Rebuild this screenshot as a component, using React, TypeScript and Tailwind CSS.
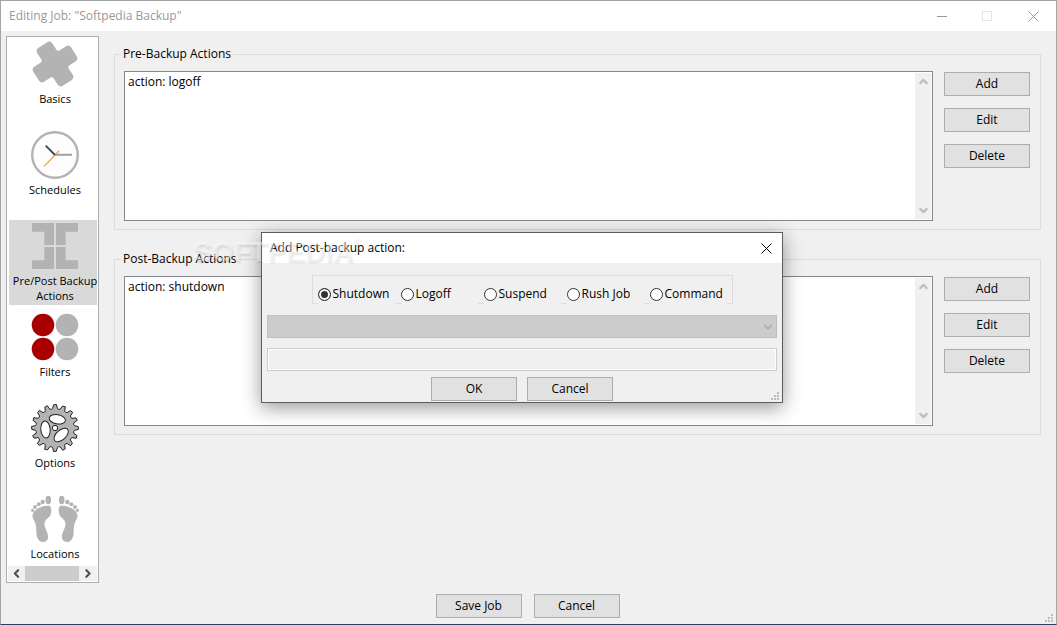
import { useState } from 'react'
import type { ReactNode } from 'react'
import { ChevronDown, ChevronLeft, ChevronRight, ChevronUp } from 'lucide-react'

function BasicsIcon() {
  return (
    <path
      transform="rotate(-33 24 24)"
      fill="#b3b3b3"
      d="M19 1.500h10q4 0 4 4v7q0 2.500 2.500 2.500h7q4 0 4 4v10q0 4-4 4h-7q-2.500 0-2.500 2.500v7q0 4-4 4h-10q-4 0-4-4v-7q0-2.500-2.500-2.500h-7q-4 0-4-4v-10q0-4 4-4h7q2.500 0 2.500-2.500v-7q0-4 4-4z"
    />
  )
}

function SchedulesIcon() {
  return (
    <g fill="none">
      <circle cx="24" cy="24" r="22.8" fill="#fdfdfd" stroke="#b3b3b3" strokeWidth="2.4" />
      <path d="M24 23.8h17" stroke="#95a5a5" strokeWidth="2" />
      <path d="M13 35.300l15-15.300" stroke="#f0a030" strokeWidth="1.200" />
      <path d="M14.700 14.700l9.300 9.300" stroke="#34495e" strokeWidth="1.800" />
    </g>
  )
}

function ActionsIcon() {
  return (
    <g fill="#b3b3b3">
      <path d="M1 1h22v22h-9.700V9.700H1z" />
      <path d="M47 1H25v22h9.700V9.700H47z" />
      <path d="M1 47h22V25h-9.700v13.300H1z" />
      <path d="M47 47H25V25h9.700v13.300H47z" />
    </g>
  )
}

function FiltersIcon() {
  return (
    <g>
      <circle cx="12" cy="12" r="11.300" fill="#a80000" />
      <circle cx="12" cy="36" r="11.300" fill="#a80000" />
      <circle cx="36" cy="12" r="11.300" fill="#b3b3b3" />
      <circle cx="36" cy="36" r="11.300" fill="#b3b3b3" />
    </g>
  )
}

// radius / angle (in degrees) pairs for one tooth, repeated around the wheel
const toothShape = [
  [19, -11],
  [19.6, -7],
  [23.2, -3.5],
  [23.6, 3.5],
  [19.6, 7],
]

const gearPoints = Array.from({ length: 16 }, (_, i) =>
  toothShape
    .map(([r, a]) => {
      const angle = ((i * 22.5 + a) * Math.PI) / 180
      return `${24 + r * Math.cos(angle)},${24 + r * Math.sin(angle)}`
    })
    .join(' '),
).join(' ')

function OptionsIcon() {
  return (
    <g fill="white" stroke="#222" strokeWidth="1">
      <polygon points={gearPoints} fill="#b3b3b3" strokeLinejoin="round" />
      <ellipse cx="26.300" cy="15.300" rx="8.200" ry="4.600" transform="rotate(10 26.3 15.3)" />
      <ellipse cx="14.500" cy="25.500" rx="4.700" ry="8.500" transform="rotate(-5 14.5 25.5)" />
      <ellipse cx="30.200" cy="31" rx="8.600" ry="4.800" transform="rotate(-42 30.2 31)" />
      <circle cx="24" cy="24" r="2.700" />
    </g>
  )
}

function Foot() {
  return (
    <>
      <ellipse cx="17.300" cy="5" rx="2.800" ry="4.200" />
      <circle cx="11.700" cy="7" r="2.200" />
      <circle cx="7.700" cy="9.200" r="2" />
      <circle cx="4" cy="12" r="1.900" />
      <circle cx="1.600" cy="15.300" r="1.600" />
      <path d="M2 18.500C5 13 12 10 18.500 10.800C21 12 20.500 18 19 21C16 24 13 26 13.500 30C14.500 35 17.500 38 17 43C16.500 46 14 47.300 11 47C7 46 5.500 42 5.300 37C5.500 31 4.500 28 2.500 24.500C1.500 22 1 20 2 18.500z" />
    </>
  )
}

function LocationsIcon() {
  return (
    <g fill="#b3b3b3">
      <Foot />
      <g transform="translate(48 0) scale(-1 1)">
        <Foot />
      </g>
    </g>
  )
}

const sections = [
  { name: 'Basics', icon: <BasicsIcon /> },
  { name: 'Schedules', icon: <SchedulesIcon /> },
  { name: 'Pre/Post Backup\nActions', icon: <ActionsIcon /> },
  { name: 'Filters', icon: <FiltersIcon /> },
  { name: 'Options', icon: <OptionsIcon /> },
  { name: 'Locations', icon: <LocationsIcon /> },
]

const actionTypes = ['Shutdown', 'Logoff', 'Suspend', 'Rush Job', 'Command']

function Button({ children }: { children: ReactNode }) {
  return (
    <button
      type="button"
      className="h-6 w-[86px] shrink-0 border border-[#adadad] bg-[#e1e1e1] leading-4 hover:bg-[#e5f1fb]"
    >
      {children}
    </button>
  )
}

function CloseIcon() {
  return (
    <svg viewBox="0 0 11 11" className="size-[11px]" stroke="currentColor">
      <path d="M.5.5l10 10M10.500.5l-10 10" />
    </svg>
  )
}

function ResizeGrip() {
  return (
    <svg viewBox="0 0 8 8" className="absolute right-[3px] bottom-[2px] size-2" fill="#bcbcbc">
      <path d="M6 0h2v2H6zM3 3h2v2H3zM6 3h2v2H6zM0 6h2v2H0zM3 6h2v2H3zM6 6h2v2H6z" />
    </svg>
  )
}

function Sidebar() {
  const [active, setActive] = useState(sections[2].name)

  return (
    <nav className="flex w-[93px] shrink-0 flex-col border border-[#abadb3] bg-white p-px">
      <ul className="min-h-0 flex-1 overflow-hidden pl-px">
        {sections.map((section) => (
          <li key={section.name} className="h-[91px]">
            <button
              type="button"
              onClick={() => setActive(section.name)}
              className={`flex w-full flex-col items-center gap-[3px] py-[2px] pl-1 text-[11px] leading-[15px] ${
                active === section.name ? 'bg-[#d9d9d9]' : ''
              }`}
            >
              <svg viewBox="0 0 48 48" className="size-12" aria-hidden="true">
                {section.icon}
              </svg>
              <span className="text-center whitespace-pre">{section.name}</span>
            </button>
          </li>
        ))}
      </ul>
      <div className="flex h-[15px] items-center bg-[#f0f0f0] text-[#505050]">
        <ChevronLeft className="w-[17px]" size={13} strokeWidth={4} />
        <div className="h-full w-[54px] bg-[#cdcdcd]" />
        <ChevronRight className="flex-1" size={13} strokeWidth={4} />
      </div>
    </nav>
  )
}

function ActionGroup({ title, action }: { title: string; action: string }) {
  return (
    <fieldset className="min-w-0 border border-[#dcdcdc] px-1.5 pb-2">
      <legend className="px-[2px] leading-4">{title}</legend>
      <div className="flex gap-[11px] pt-[9px] pr-1 pl-[3px]">
        <div className="flex h-[150px] min-w-0 flex-1 border border-[#828790] bg-white p-px">
          <select
            size={8}
            aria-label={title}
            className="min-w-0 flex-1 appearance-none overflow-hidden bg-white outline-none"
          >
            <option className="min-h-3.5 px-[2px] py-0 leading-[14px]">{action}</option>
          </select>
          <div className="flex w-4 flex-col items-center justify-between bg-[#f0f0f0] py-[2px] text-[#bfbfbf]">
            <ChevronUp size={13} strokeWidth={4} />
            <ChevronDown size={13} strokeWidth={4} />
          </div>
        </div>
        <div className="flex flex-col gap-3 pt-px">
          <Button>Add</Button>
          <Button>Edit</Button>
          <Button>Delete</Button>
        </div>
      </div>
    </fieldset>
  )
}

function AddActionDialog() {
  const [type, setType] = useState('Shutdown')

  return (
    <div
      role="dialog"
      aria-label="Add Post-backup action:"
      className="absolute top-[231px] left-[260px] w-[522px] border border-[#5c5c5c] bg-[#f0f0f0] shadow-[0_5px_18px_rgba(0,0,0,0.4)]"
    >
      <div className="flex h-[30px] items-center justify-between bg-white pl-2">
        <h2>Add Post-backup action:</h2>
        <button type="button" aria-label="Close" className="flex h-full w-[31px] items-center justify-center">
          <CloseIcon />
        </button>
      </div>
      <div className="flex flex-col px-[5px] pt-3 pb-px">
        <div role="radiogroup" className="flex gap-1.5 self-center border border-[#dcdcdc] px-[5px] pt-2">
          {actionTypes.map((name) => (
            <label
              key={name}
              className="-mb-px flex h-5 w-[77px] items-center gap-[2px] bg-[#f0f0f0] whitespace-nowrap"
            >
              <input
                type="radio"
                name="action-type"
                checked={type === name}
                onChange={() => setType(name)}
                className="size-[13px] shrink-0 appearance-none rounded-full border border-[#333] bg-white checked:bg-[#333] checked:shadow-[inset_0_0_0_2px_#fff]"
              />
              {name}
            </label>
          ))}
        </div>
        <div className="relative mt-[11px]">
          <select
            disabled
            aria-label="Target"
            className="block h-[23px] w-full appearance-none border border-[#bfbfbf] bg-[#cccccc]"
          />
          <ChevronDown className="absolute top-[5px] right-[2px] text-[#a5a5a5]" size={14} strokeWidth={2} />
        </div>
        <input
          type="text"
          disabled
          aria-label="Command line"
          className="mt-[10px] h-[23px] w-full border border-[#cccccc] bg-[#f0f0f0] px-1 shadow-[inset_0_0_0_1px_#fff]"
        />
        <div className="mt-1.5 flex justify-center gap-[10px]">
          <Button>OK</Button>
          <Button>Cancel</Button>
        </div>
      </div>
      <ResizeGrip />
    </div>
  )
}

export default function App() {
  return (
    <div className="relative flex h-screen flex-col border border-[#a5a5a5] border-b-[#2b3f63] bg-[#f0f0f0] font-['Open_Sans','Noto_Sans',sans-serif] text-[12px] leading-4 text-black">
      <header className="flex h-[30px] shrink-0 items-center bg-white pl-2 text-[#999]">
        <h1 className="flex-1">Editing Job: "Softpedia Backup"</h1>
        <button type="button" aria-label="Minimize" className="flex h-full w-[45px] items-center justify-center">
          <span className="h-px w-[10px] bg-[#999]" />
        </button>
        <button type="button" aria-label="Maximize" className="flex h-full w-[46px] items-center justify-center">
          <span className="size-[10px] border border-[#e5e5e5]" />
        </button>
        <button type="button" aria-label="Close" className="flex h-full w-[46px] items-center justify-center">
          <CloseIcon />
        </button>
      </header>

      <main className="flex min-h-0 flex-1 gap-[15px] pt-[5px] pr-[15px] pl-[5px]">
        <Sidebar />
        <div className="flex min-w-0 flex-1 flex-col gap-[21px] pt-[10px]">
          <ActionGroup title="Pre-Backup Actions" action="action: logoff" />
          <ActionGroup title="Post-Backup Actions" action="action: shutdown" />
        </div>
      </main>

      <footer className="flex shrink-0 justify-center gap-3 pt-[11px] pr-[2px] pb-1.5">
        <Button>Save Job</Button>
        <Button>Cancel</Button>
      </footer>
      <ResizeGrip />

      <AddActionDialog />

      <div className="pointer-events-none absolute top-[235px] left-[192px] flex font-['Liberation_Sans',sans-serif] text-[28px] leading-8 font-bold text-white/45 [text-shadow:1px_2px_2px_rgba(0,0,0,0.1)]">
        SOFTPEDIA
        <span className="text-[10px] leading-3">®</span>
      </div>
    </div>
  )
}
